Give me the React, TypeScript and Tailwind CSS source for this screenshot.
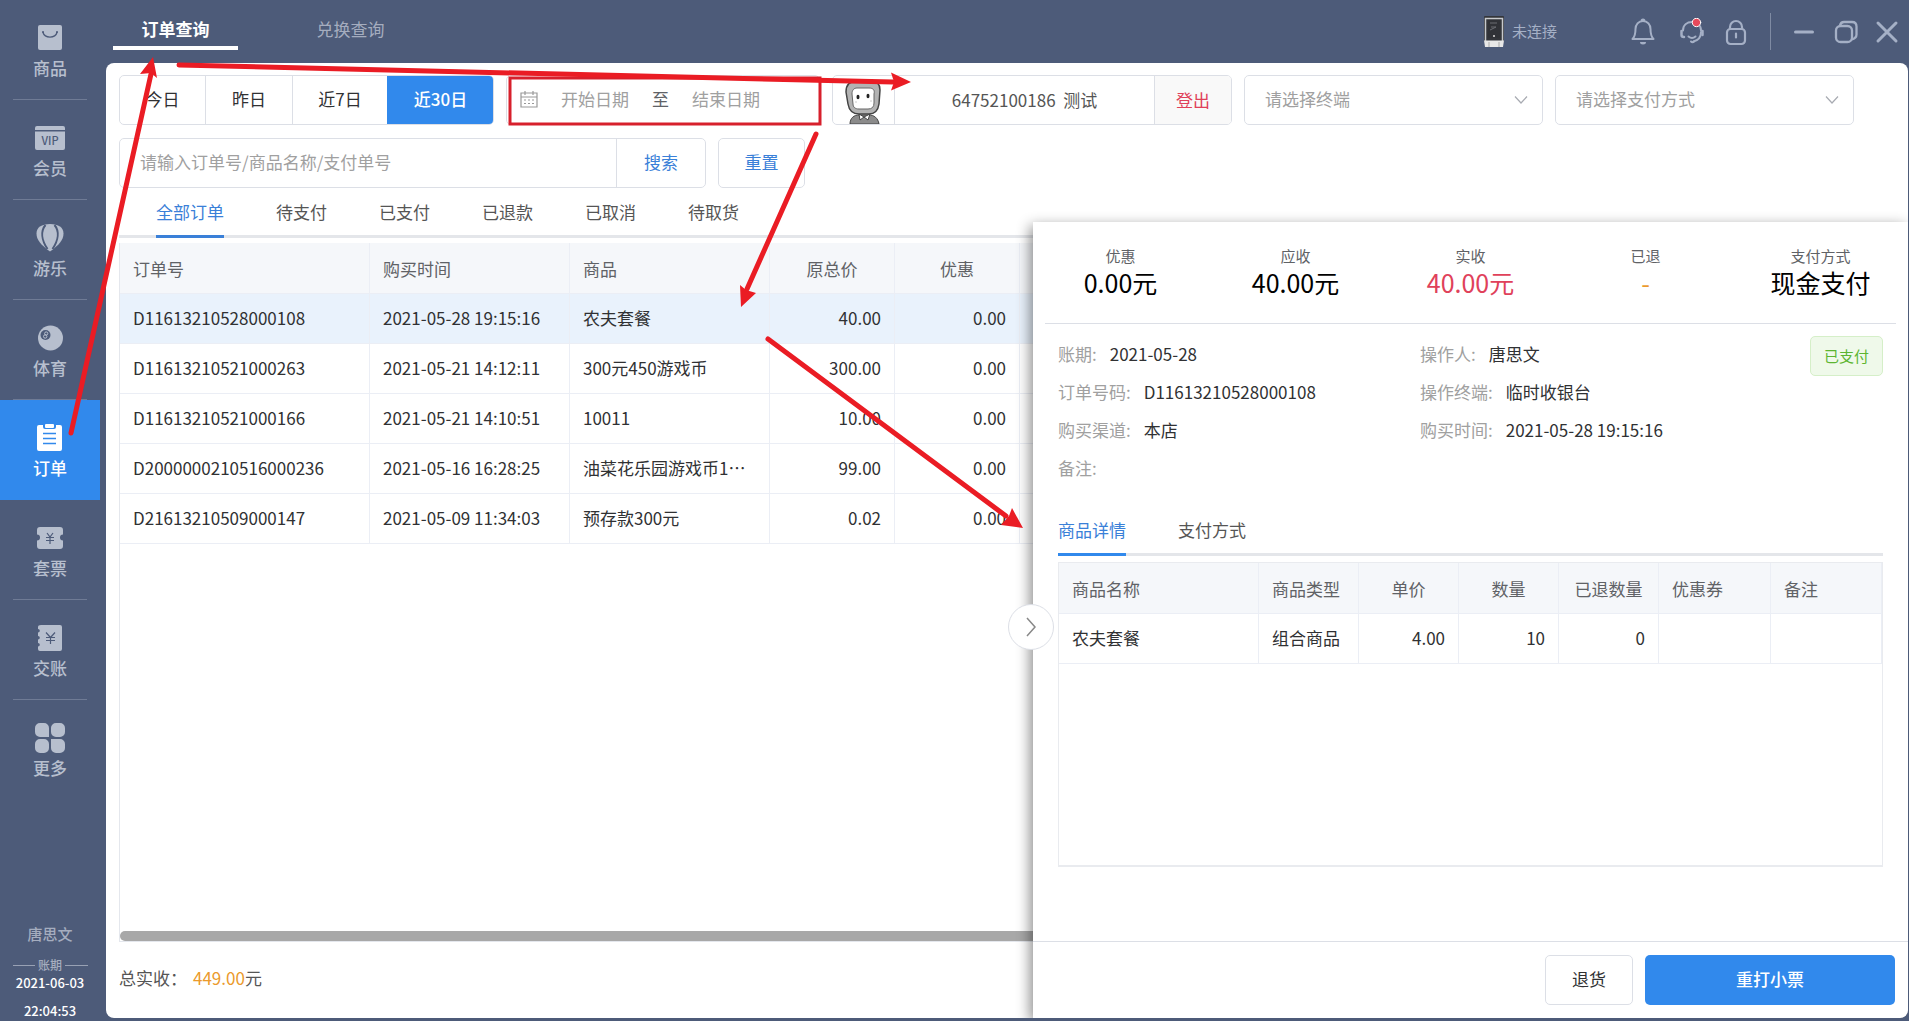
import type { ReactNode } from "react";

const ORDER_ROWS = [
  ["D11613210528000108", "2021-05-28 19:15:16", "农夫套餐", "40.00", "0.00"],
  ["D11613210521000263", "2021-05-21 14:12:11", "300元450游戏币", "300.00", "0.00"],
  ["D11613210521000166", "2021-05-21 14:10:51", "10011", "10.00", "0.00"],
  ["D2000000210516000236", "2021-05-16 16:28:25", "油菜花乐园游戏币1…", "99.00", "0.00"],
  ["D21613210509000147", "2021-05-09 11:34:03", "预存款300元", "0.02", "0.00"],
];

const NAV: { label: string; icon: ReactNode; active?: boolean }[] = [
  {
    label: "商品",
    icon: (
      <>
        <rect x="3" y="3" width="24" height="25" rx="2" fill="currentColor" />
        <path d="M8 10.500a7.200 6 0 0 0 14 0M7 10h2M21 10h2" fill="none" stroke="#4d5b79" strokeWidth="1.300" />
      </>
    ),
  },
  {
    label: "会员",
    icon: (
      <>
        <path d="M0 8V6a2 2 0 0 1 2-2h26a2 2 0 0 1 2 2v2zM0 9.500h30V26a2 2 0 0 1-2 2H2a2 2 0 0 1-2-2z" fill="currentColor" />
        <text x="15" y="22.500" fontSize="11" textAnchor="middle" fill="#4d5b79" fontWeight="500">VIP</text>
      </>
    ),
  },
  {
    label: "游乐",
    icon: (
      <>
        <path d="M15 2C6.500 2 1.500 5.500 1.500 11.500 1.500 18 6 23 15 29.500 24 23 28.500 18 28.500 11.500 28.500 5.500 23.500 2 15 2z" fill="currentColor" />
        <path d="M10.500 3C5.500 9 6.500 18 12.500 27M19.500 3C24.500 9 23.500 18 17.500 27" fill="none" stroke="#4d5b79" strokeWidth="2" />
      </>
    ),
  },
  {
    label: "体育",
    icon: (
      <>
        <circle cx="15.500" cy="16" r="12.500" fill="currentColor" />
        <circle cx="10.500" cy="13" r="5" fill="#4d5b79" />
        <circle cx="11.200" cy="11.500" r="1.600" fill="none" stroke="currentColor" />
        <circle cx="10.200" cy="14.500" r="1.700" fill="none" stroke="currentColor" />
      </>
    ),
  },
  {
    label: "订单",
    active: true,
    icon: (
      <>
        <path d="M4 3h4v2a2 2 0 0 0 2 2h9a2 2 0 0 0 2-2V3h4a2 2 0 0 1 2 2v22a2 2 0 0 1-2 2H4a2 2 0 0 1-2-2V5a2 2 0 0 1 2-2z" fill="currentColor" />
        <rect x="10" y="2" width="9" height="4" rx="1" fill="currentColor" />
        <path d="M8 11.500h13M8 16.500h13M8 21.500h13" stroke="#3189ec" strokeWidth="1.500" />
      </>
    ),
  },
  {
    label: "套票",
    icon: (
      <>
        <path d="M5 5h20a3 3 0 0 1 3 3v4.500a3 3 0 0 0 0 6V24a3 3 0 0 1-3 3H5a3 3 0 0 1-3-3v-5.500a3 3 0 0 0 0-6V8a3 3 0 0 1 3-3z" fill="currentColor" />
        <path d="M12 11l3 4 3-4M15 15v7M11 15.500h8M11 18.500h8" fill="none" stroke="#4d5b79" strokeWidth="1.200" />
      </>
    ),
  },
  {
    label: "交账",
    icon: (
      <>
        <path d="M6 3h19a2 2 0 0 1 2 2v22a2 2 0 0 1-2 2H5a2 2 0 0 1-2-2v-2.500a1.800 1.800 0 0 0 0-3.600v-3.400a1.800 1.800 0 0 0 0-3.600v-3.400a1.800 1.800 0 0 0 0-3.600V5a3 2 0 0 1 3-2z" fill="currentColor" />
        <path d="M11 10.500l4.500 5 4.500-5M15.500 15.500v6.500M11 15.500h9M11 18.500h9" fill="none" stroke="#4d5b79" strokeWidth="1.200" />
      </>
    ),
  },
  {
    label: "更多",
    icon: (
      <path
        d="M5 1h4a5 5 0 0 1 5 5v9H5a5 5 0 0 1-5-5V6a5 5 0 0 1 5-5zM21 1h4a5 5 0 0 1 5 5v4a5 5 0 0 1-5 5h-4a5 5 0 0 1-5-5V6a5 5 0 0 1 5-5zM5 17h4a5 5 0 0 1 5 5v4a5 5 0 0 1-5 5H5a5 5 0 0 1-5-5v-4a5 5 0 0 1 5-5zM16 17h9a5 5 0 0 1 5 5v4a5 5 0 0 1-5 5h-4a5 5 0 0 1-5-5z"
        fill="currentColor"
      />
    ),
  },
];

function Sidebar() {
  return (
    <aside className="flex w-[100px] shrink-0 flex-col">
      <nav>
        {NAV.map((item, i) => (
          <div key={item.label} className={item.active ? "bg-[#3189ec] text-white" : "text-[#b7bfce]"}>
            <button className="flex h-[99px] w-full flex-col items-center pt-[22px] font-medium">
              <svg width="30" height="31" viewBox="0 0 30 31" aria-hidden="true">{item.icon}</svg>
              <span className="mt-[3px] leading-6">{item.label}</span>
            </button>
            <div className={item.active || i === NAV.length - 1 ? "h-px" : "mx-[13px] h-px bg-[#6f7b95]"} />
          </div>
        ))}
      </nav>
      <div className="mt-auto flex flex-col items-center text-[13px] font-medium leading-5 text-white">
        <span className="mb-[13px] text-[15px] text-[#a5adbf]">唐思文</span>
        <div className="flex w-[75px] items-center gap-[3px] text-[12px] leading-4 text-[#a5adbf]">
          <i className="h-px flex-1 bg-[#98a1b4]" />
          <span>账期</span>
          <i className="h-px flex-1 bg-[#98a1b4]" />
        </div>
        <span>2021-06-03</span>
        <span className="mt-2">22:04:53</span>
      </div>
    </aside>
  );
}

function TopBar() {
  return (
    <header className="flex h-[63px] items-start">
      <div className="flex gap-[50px] pl-[7px]">
        <button className="h-[50px] w-[125px] border-b-4 border-white pt-3 font-bold text-white">订单查询</button>
        <button className="h-[50px] w-[125px] border-b-4 border-transparent pt-3 text-[#a5adbf]">兑换查询</button>
      </div>
      <div className="ml-auto flex h-[63px] items-center pr-[9px] text-[#a5b0c6]">
        <svg width="20" height="32" viewBox="0 0 20 32" aria-hidden="true">
          <rect width="20" height="26" rx="1" fill="#33353a" />
          <path d="M1.500 25V2.500h17V25" fill="none" stroke="#c7c9cc" strokeWidth="1.500" />
          <rect x="4" y="4" width="12" height="18" fill="#303237" />
          <path d="M6 7h7M7 11h5M6 14l6-3" stroke="#6a6d73" />
          <circle cx="10" cy="20" r="1" fill="#ddd" />
          <path d="M0 24.500h20l-1 6.500H1z" fill="#e8e8e8" />
          <path d="M5 26v5M15 26v5" stroke="#aaa" />
        </svg>
        <span className="ml-2 text-[15px]">未连接</span>
        <button aria-label="通知" className="ml-[74px]">
          <svg width="24" height="28" viewBox="0 0 24 28" fill="none" stroke="currentColor" strokeWidth="2" strokeLinejoin="round">
            <path d="M12 3c-4.500 0-7.500 3.500-7.500 8 0 5-1 8-3 10h21c-2-2-3-5-3-10 0-4.500-3-8-7.500-8zM10.500 3a1.500 1.500 0 0 1 3 0" />
            <path d="M9 24a3 2.500 0 0 0 6 0z" fill="currentColor" stroke="none" />
          </svg>
        </button>
        <button aria-label="客服" className="ml-6">
          <svg width="26" height="28" viewBox="0 0 26 28" fill="none" stroke="currentColor" strokeWidth="2" strokeLinecap="round">
            <path d="M4 12.500C4 7 8 4 13 4s9 3 9 8.500M22 14c0 5.500-3.500 8.500-7.500 9.500" />
            <path d="M2.500 13v4c0 1 1 2 2.500 2M23.500 13v4" strokeWidth="2.500" />
            <path d="M9.500 18.500c2 1.700 5 1.700 7 0M12 23.500c1 1 2 1 3 0" />
            <circle cx="17.500" cy="4.500" r="4.200" fill="#e84a5c" stroke="#fff" strokeWidth="1" />
          </svg>
        </button>
        <button aria-label="锁定" className="ml-5">
          <svg width="22" height="28" viewBox="0 0 22 28" fill="none" stroke="currentColor" strokeWidth="2.200">
            <rect x="2" y="11" width="18" height="15" rx="3.500" />
            <path d="M5 11V9a6 6 0 0 1 12 0v2M11 15.500v4" strokeLinecap="round" />
          </svg>
        </button>
        <i className="ml-[23px] h-[37px] w-px bg-[#7f8ba3]" />
        <button aria-label="最小化" className="ml-[23px]">
          <svg width="20" height="20" viewBox="0 0 20 20" fill="none" stroke="currentColor" strokeWidth="3" strokeLinecap="round">
            <path d="M1.500 10h17" />
          </svg>
        </button>
        <button aria-label="还原" className="ml-5">
          <svg width="24" height="24" viewBox="0 0 24 24" fill="none" stroke="currentColor" strokeWidth="2.300">
            <rect x="2" y="6" width="16" height="16" rx="4.500" />
            <path d="M6 5.500C6.500 3 8 2 10 2h8c3 0 4.500 1.500 4.500 4.500v8c0 2-1.500 4-4.500 5" />
          </svg>
        </button>
        <button aria-label="关闭" className="ml-[17px]">
          <svg width="24" height="24" viewBox="0 0 24 24" fill="none" stroke="currentColor" strokeWidth="3" strokeLinecap="round">
            <path d="M3 3l18 18M21 3L3 21" />
          </svg>
        </button>
      </div>
    </header>
  );
}

function Avatar() {
  return (
    <svg width="61" height="48" viewBox="0 0 61 48" className="shrink-0" aria-hidden="true">
      <path d="M17 48c0-6 4-9 9-9h10c5 0 9 3 10 9z" fill="#8b8b8b" stroke="#444" />
      <path d="M26 38l5 3 6-3-2 6-4-3-4 3z" fill="#fff" stroke="#444" />
      <path d="M24 5h14c6 0 9 3 9 9l-1 14c-1 7-4 10-10 10H26c-7 0-10-4-11-10l-2-12c0-7 4-11 11-11z" fill="#b3b3b3" stroke="#444" strokeWidth="1.500" />
      <path d="M24 12h12c4 0 6 2 5 6v9c0 4-2 6-6 6h-9c-4 0-6-2-6-5l-1-10c0-4 2-6 5-6z" fill="#fff" stroke="#666" />
      <ellipse cx="25" cy="21" rx="1.500" ry="2.300" fill="#222" />
      <ellipse cx="35" cy="20" rx="1.500" ry="2.300" fill="#222" />
      <path d="M22 26h2M37 25h2" stroke="#ccc" />
    </svg>
  );
}

function Dropdown({ label }: { label: string }) {
  return (
    <div className="relative h-[50px] w-[299px]">
      <select aria-label={label} className="h-full w-full appearance-none rounded-[5px] border border-[#dcdfe6] bg-white pb-0.5 pl-5 text-[#a0a0a0]">
        <option>{label}</option>
      </select>
      <svg className="pointer-events-none absolute right-[15px] top-5" width="14" height="10" viewBox="0 0 14 10" fill="none" stroke="#a8abb2" strokeWidth="1.200">
        <path d="M1 1.500l6 6.500 6-6.500" />
      </svg>
    </div>
  );
}

function Filters() {
  return (
    <div className="flex flex-col gap-[13px] px-[13px]">
      <div className="flex gap-3">
        <div className="flex h-[50px] overflow-hidden rounded-[5px] border border-[#dcdfe6]">
          <button className="w-[86px] border-r border-[#dcdfe6] pb-0.5">今日</button>
          <button className="w-[87px] border-r border-[#dcdfe6] pb-0.5">昨日</button>
          <button className="w-[94px] pb-0.5">近7日</button>
          <button className="-my-px -mr-px w-[107px] bg-[#3189ec] pb-0.5 font-medium text-white">近30日</button>
        </div>
        <div className="flex h-[50px] w-[314px] items-center rounded-[5px] border border-[#dcdfe6] pb-0.5 pl-[13px]">
          <svg width="18" height="18" viewBox="0 0 18 18" fill="none" stroke="#999" strokeWidth="1.200" aria-hidden="true">
            <path d="M1 3h16v14H1zM1 7h16M5 1v4M13 1v4M4 10h2M8 10h2M12 10h2M4 13.500h2M8 13.500h2M12 13.500h2" />
          </svg>
          <input aria-label="开始日期" placeholder="开始日期" className="ml-1 w-[106px] text-center placeholder:text-[#a0a0a0]" />
          <span className="px-1 text-[#606266]">至</span>
          <input aria-label="结束日期" placeholder="结束日期" className="w-[106px] text-center placeholder:text-[#a0a0a0]" />
        </div>
        <div className="flex h-[50px] w-[400px] overflow-hidden rounded-[5px] border border-[#dcdfe6]">
          <Avatar />
          <div className="flex flex-1 items-center justify-center whitespace-pre border-x border-[#dcdfe6] text-[#555]">64752100186  测试</div>
          <button className="w-[76px] bg-[#f9f9f9] text-[#e0415a]">登出</button>
        </div>
        <Dropdown label="请选择终端" />
        <Dropdown label="请选择支付方式" />
      </div>
      <div className="flex gap-3 text-[#3a80d8]">
        <div className="flex h-[50px] w-[587px] overflow-hidden rounded-[5px] border border-[#dcdfe6]">
          <input
            aria-label="搜索订单"
            placeholder="请输入订单号/商品名称/支付单号"
            className="min-w-0 flex-1 border-r border-[#dcdfe6] pb-0.5 pl-5 placeholder:text-[#a0a0a0]"
          />
          <button className="w-[88px] pb-0.5">搜索</button>
        </div>
        <button className="h-[50px] w-[87px] rounded-[5px] border border-[#dcdfe6] pb-0.5">重置</button>
      </div>
    </div>
  );
}

const cell = "border-b border-r border-[#ebeef5] px-[13px]";

function Orders() {
  return (
    <>
      <div className="mx-[13px] flex h-[50px] gap-[52px] border-b-[3px] border-[#e4e6ea] pl-[37px] text-[#555]">
        <button className="-mb-[3px] border-b-[3px] border-[#3a80d8] text-[#3a80d8]">全部订单</button>
        {["待支付", "已支付", "已退款", "已取消", "待取货"].map((t) => (
          <button key={t}>{t}</button>
        ))}
      </div>
      <div className="ml-[13px] mt-[5px] flex flex-1 flex-col border-b border-l border-[#e4e7ed]">
        <table className="w-full table-fixed border-separate border-spacing-0">
          <colgroup>
            <col className="w-[250px]" />
            <col className="w-[200px]" />
            <col className="w-[200px]" />
            <col className="w-[125px]" />
            <col className="w-[125px]" />
            <col />
          </colgroup>
          <thead className="bg-[#f5f7fa] text-[#606266]">
            <tr className="h-[51px]">
              {["订单号", "购买时间", "商品", "原总价", "优惠", ""].map((h, i) => (
                <th key={i} className={`${cell} pt-0.5 font-normal ${i > 2 ? "text-center" : "text-left"}`}>{h}</th>
              ))}
            </tr>
          </thead>
          <tbody>
            {ORDER_ROWS.map((row, r) => (
              <tr key={row[0]} className={r === 0 ? "h-[50px] bg-[#e9f2fc]" : "h-[50px]"}>
                {row.map((v, i) => (
                  <td key={i} className={`${cell} whitespace-nowrap pb-0.5 ${i > 2 ? "text-right" : "text-left"}`}>{v}</td>
                ))}
                <td className={cell} />
              </tr>
            ))}
          </tbody>
        </table>
        <div className="mt-auto h-[10px] rounded-full bg-[#a8a8a8]" />
      </div>
      <footer className="flex h-[76px] items-center px-[13px] pb-1 text-[#555]">
        总实收：<span className="ml-1.5 text-[#eb9a2c]">449.00</span>元
      </footer>
    </>
  );
}

function Info({ label, value }: { label: string; value?: string }) {
  return (
    <div className="flex gap-[13px]">
      <dt className="text-[#a0a0a0]">{label}:</dt>
      <dd>{value}</dd>
    </div>
  );
}

function Detail() {
  const stats = [
    ["优惠", "0.00元", "text-black"],
    ["应收", "40.00元", "text-black"],
    ["实收", "40.00元", "text-[#e0415a]"],
    ["已退", "-", "text-[#eb9a2c]"],
    ["支付方式", "现金支付", "text-black"],
  ];
  return (
    <section className="absolute bottom-0 right-0 top-[159px] flex w-[875px] flex-col rounded-br-lg bg-white shadow-[-3px_4px_14px_rgba(0,0,0,0.45)] [clip-path:inset(-12px_0_0_-40px)]">
      <button aria-label="收起" className="absolute -left-[25px] top-[382px] flex size-[46px] items-center justify-center rounded-full border border-[#dcdfe6] bg-white">
        <svg width="12" height="20" viewBox="0 0 12 20" fill="none" stroke="#888" strokeWidth="1.500">
          <path d="M2 1l8 9-8 9" />
        </svg>
      </button>
      <div className="mx-3 border-b border-[#dcdfe6]">
        <div className="-mx-3 grid h-[101px] grid-cols-5 pt-6 text-center">
          {stats.map(([k, v, c]) => (
            <div key={k}>
              <div className="text-[15px] leading-5 text-[#606266]">{k}</div>
              <div className={`text-[25px] leading-8 ${c}`}>{v}</div>
            </div>
          ))}
        </div>
      </div>
      <div className="flex items-start px-[25px] pt-3">
        <dl className="flex w-[362px] flex-col gap-[14px] pt-1.5 leading-6">
          <Info label="账期" value="2021-05-28" />
          <Info label="订单号码" value="D11613210528000108" />
          <Info label="购买渠道" value="本店" />
          <Info label="备注" />
        </dl>
        <dl className="flex flex-col gap-[14px] pt-1.5 leading-6">
          <Info label="操作人" value="唐思文" />
          <Info label="操作终端" value="临时收银台" />
          <Info label="购买时间" value="2021-05-28 19:15:16" />
        </dl>
        <span className="ml-auto flex h-10 w-[73px] items-center justify-center rounded-[5px] border border-[#d5efc8] bg-[#eff9ea] text-[15px] text-[#5cb531]">已支付</span>
      </div>
      <div className="mx-[25px] mt-[26px] flex h-[50px] gap-[52px] border-b-[3px] border-[#e4e6ea] text-[#555]">
        <button className="-mb-[3px] border-b-[3px] border-[#3189ec] text-[#3a80d8]">商品详情</button>
        <button>支付方式</button>
      </div>
      <div className="mx-[25px] mt-[6px] h-[305px] border border-b-2 border-[#e9ebef]">
        <table className="w-full table-fixed border-separate border-spacing-0">
          <colgroup>
            <col className="w-[200px]" />
            <col className="w-[100px]" />
            <col className="w-[100px]" />
            <col className="w-[100px]" />
            <col className="w-[100px]" />
            <col className="w-[112px]" />
            <col />
          </colgroup>
          <thead className="bg-[#f5f7fa] text-[#606266]">
            <tr className="h-[51px]">
              {["商品名称", "商品类型", "单价", "数量", "已退数量", "优惠券", "备注"].map((h, i) => (
                <th key={h} className={`${cell} whitespace-nowrap pt-0.5 font-normal ${i > 1 && i < 5 ? "text-center" : "text-left"}`}>{h}</th>
              ))}
            </tr>
          </thead>
          <tbody>
            <tr className="h-[50px]">
              {["农夫套餐", "组合商品", "4.00", "10", "0", "", ""].map((v, i) => (
                <td key={i} className={`${cell} whitespace-nowrap pb-0.5 ${i > 1 ? "text-right" : "text-left"}`}>{v}</td>
              ))}
            </tr>
          </tbody>
        </table>
      </div>
      <div className="mt-auto flex h-[77px] justify-end gap-3 border-t border-[#dcdfe6] px-[13px] pt-[13px]">
        <button className="h-[50px] w-[88px] rounded-[5px] border border-[#dcdfe6] pb-0.5">退货</button>
        <button className="h-[50px] w-[250px] rounded-[5px] bg-[#3189ec] pb-0.5 font-medium text-white">重打小票</button>
      </div>
    </section>
  );
}

function Annotations() {
  return (
    <svg className="pointer-events-none absolute left-0 top-0" width="1909" height="1021" viewBox="0 0 1909 1021" aria-hidden="true">
      <g fill="none" stroke="#ea1c24" strokeWidth="5" strokeLinecap="round">
        <rect x="510" y="78" width="310" height="46" strokeWidth="3" stroke="#d7202c" />
        <path d="M71 433L151 74M179 65L893 82M816 134L747 289M768 339L1006 516" />
      </g>
      <g fill="#ea1c24">
        <path d="M153 57l-13 17 11-1 6 5z" />
        <path d="M911 82l-20-9.500 3 9.500-3 8.500z" />
        <path d="M741 307l-1-22 6 5 10 3z" />
        <path d="M1023 528l-11-20-3 8-8 9z" />
      </g>
    </svg>
  );
}

export default function App() {
  return (
    <div lang="zh-CN" className="relative flex min-h-screen bg-[#4d5b79] font-['Noto_Sans_CJK_SC',sans-serif] text-[17px] text-[#303133]">
      <Sidebar />
      <div className="flex min-w-0 flex-1 flex-col pb-[3px] pl-[6px] pr-px">
        <TopBar />
        <main className="relative flex flex-1 flex-col overflow-hidden rounded-lg bg-white pt-3">
          <Filters />
          <Orders />
          <Detail />
        </main>
      </div>
      <Annotations />
    </div>
  );
}
